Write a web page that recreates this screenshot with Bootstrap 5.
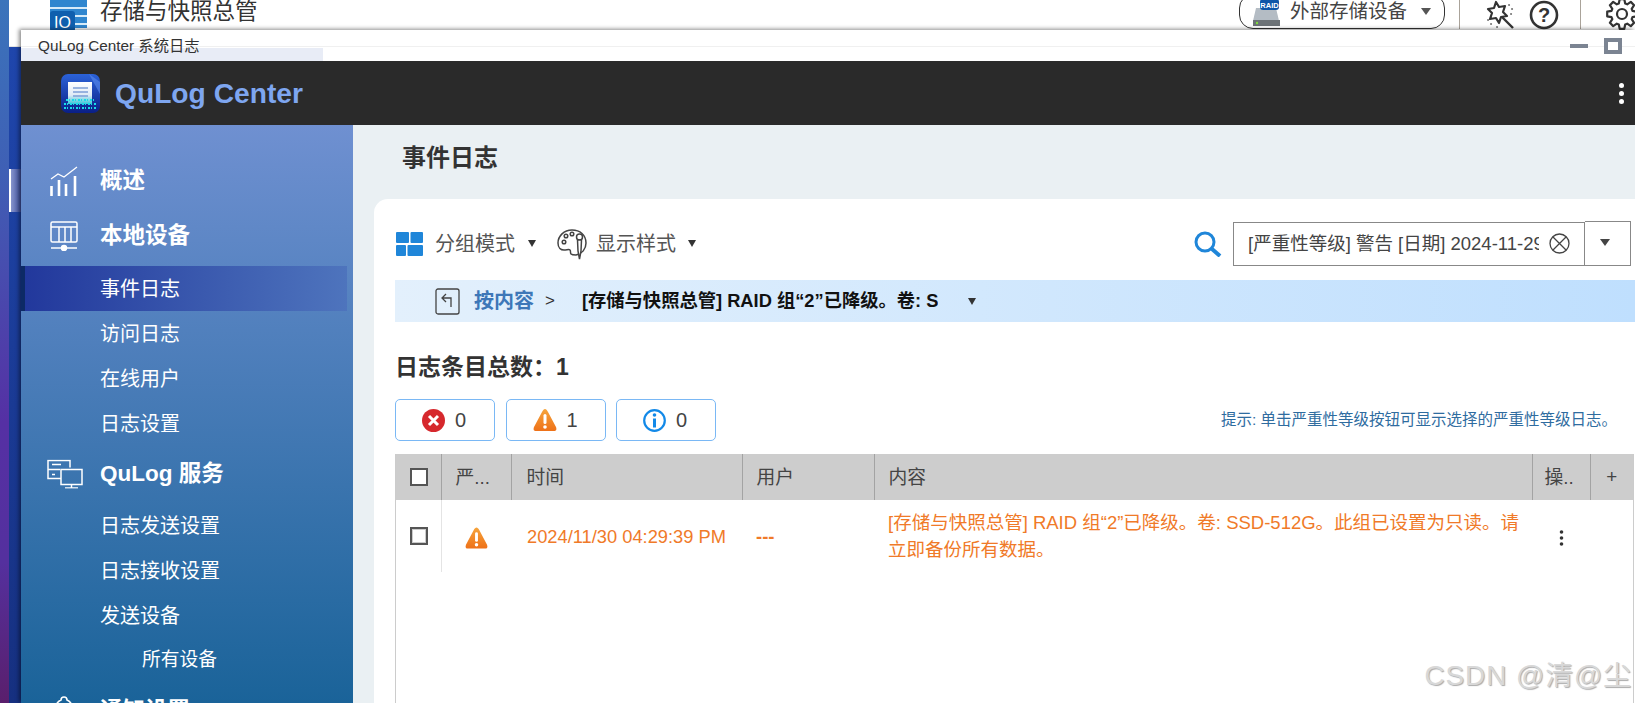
<!DOCTYPE html>
<html lang="zh-CN">
<head>
<meta charset="utf-8">
<title>QuLog Center 系统日志</title>
<link href="https://cdn.jsdelivr.net/npm/bootstrap@5.3.0/dist/css/bootstrap.min.css" rel="stylesheet">
<style>
html,body{height:703px;overflow:hidden}
body{font-family:"Liberation Sans","Noto Sans CJK SC",sans-serif;background:#fff;color:#333;width:1635px;position:relative}
.wall{width:9px;height:703px;flex:none;background:linear-gradient(#3b74bb 0,#3f5fb5 25%,#5530a4 60%,#54309e 80%,#5a1f6c 100%)}
.desk{flex:1;min-width:0}
.appbar{height:47px;background:#fff;border-bottom:1px solid #e4e4e4;overflow:hidden;padding-left:41px}
.appbar-title{font-size:22.5px;color:#333;line-height:24px;margin-left:13px}
.app-ico{margin-top:-8px;display:block;flex:none}
.pill{width:206px;height:35px;margin-top:-6px;border:1.5px solid #333;border-radius:14px;font-size:19.5px;color:#444;padding:0 13px 0 12px;line-height:1}
.pill-arrow{width:0;height:0;border:5.5px solid transparent;border-top:7px solid #555;border-bottom:0}
.vsep{width:1px;height:29px;background:#aaa39a}
.right-tools{margin-right:-3px}
.rail{height:656px;background:linear-gradient(#1f46ac,#163080)}
.rail-mark{width:2px;height:43px;background:#fff;margin-top:122px}
.rail-tint{width:10px;height:43px;margin-top:122px;background:linear-gradient(90deg,#8794cc,#3e4f9e)}
.win{position:absolute;left:21px;top:30px;right:0;bottom:0;background:#fff;box-shadow:-2px -1px 4px rgba(0,0,0,.45);display:flex;flex-direction:column}
.win-title{height:31px;flex:none;font-size:15.3px;color:#333;padding-left:17px;padding-right:13px;background:linear-gradient(#e8ecf6,#e8ecf6) left bottom/302px 13px no-repeat,linear-gradient(#f0f0f0,#f0f0f0) left 16px/100% 1px no-repeat,#fff;line-height:30px}
.win-min{width:18px;height:4px;background:#7b8492;margin-right:16px}
.win-max{width:18px;height:16px;border:4px solid #7b8492;background:#fff}
.win-head{height:64px;flex:none;background:#2a2a2a;padding-left:40px;padding-right:11px}
.brand{font-size:28.2px;font-weight:700;color:#7ea6f0;margin-left:15px;line-height:1}
.kebab i{display:block;width:5px;height:5px;border-radius:50%;background:#fff;margin:3px 0}
.win-body{flex:1;min-height:0}
.side{width:332px;flex:none;background:linear-gradient(#6f90d1,#1a6399);overflow:hidden;padding-top:28px;color:#fff}
.side-head{height:55px;flex:none;font-size:22.5px;font-weight:700;padding-left:79px;position:relative}
.side-head svg{position:absolute;left:29px;top:50%;transform:translateY(-50%)}
.side-head svg.ico-wide{left:26px}
.side-sub{height:45px;flex:none;font-size:20px;padding-left:75px;margin-right:6px;border-left:4px solid transparent}
.side-sub.is-on{background:linear-gradient(90deg,#22389c,#4e74bd);border-left-color:#0d2a66}
.side-deep{font-size:18.75px;padding-left:117px}
.gap-top3{margin-top:3px}.gap-top2{margin-top:2px}
.main-area{flex:1;min-width:0;background:#eaf0f3;display:flex;flex-direction:column}
.main-title{height:74px;flex:none;font-size:24px;font-weight:700;color:#333;padding-left:49px;line-height:66px}
.panel{flex:1;background:#fff;border-top-left-radius:14px;margin-left:21px;padding-left:21px;display:flex;flex-direction:column;min-height:0}
.tools{height:45px;margin-top:22px;flex:none;padding-right:4px;padding-left:1px}
.tool-txt{font-size:20px;color:#555;line-height:1}
.tri{width:0;height:0;border:4.5px solid transparent;border-top:7px solid #333;border-bottom:0}
.search-box{width:352px;height:44px;border:1px solid #888;font-size:18.5px;color:#444;padding-left:14px;padding-right:14px}
.search-txt{width:291px;overflow:hidden;white-space:nowrap;flex:none}
.search-drop{width:46px;height:45px;border:1px solid #888;border-left:0;padding:0 5px 2px 0}
.tri-drop{border-width:7px 5.5px 0;border-top-color:#444}
.crumb{height:42px;margin-top:14px;flex:none;background:linear-gradient(90deg,#e3f0fc,#bfdffe);padding-left:40px}
.crumb-a{font-size:20px;font-weight:700;color:#3d77b8;margin-left:14px}
.crumb-gt{font-size:17px;color:#333;margin-left:11px}
.crumb-b{font-size:18.3px;font-weight:700;color:#111;margin-left:27px;width:356px;overflow:hidden;white-space:nowrap}
.crumb-tri{margin-left:30px;border-top-color:#333}
.total{font-size:23px;font-weight:700;color:#333;height:44px;margin-top:23px;flex:none;line-height:44px}
.sev-row{margin-top:10px;height:42px;flex:none;padding-right:18px;gap:10.5px}
.sev{width:100px;height:42px;border:1px solid #7ab8f5;border-radius:5px;background:#fff;font-size:20px;color:#444;padding:0 0 0 26px;gap:10px}
.hint{font-size:15.5px;color:#2f6c9f;line-height:1}
.tbl-wrap{flex:1;margin-top:13px;border-left:1px solid #ccc;border-right:1px solid #ccc;min-height:0;margin-right:1px}
.log-tbl{table-layout:fixed;width:100%;margin:0;--bs-table-bg:transparent}
.log-tbl>thead>tr>th{height:46px;background:#cdcdcd;font-weight:400;font-size:18.75px;color:#444;padding:2px 4px 0 14px;border:0;border-left:1px solid #a3a3a3;white-space:nowrap;overflow:hidden;vertical-align:middle}
.log-tbl>thead>tr>th:first-child{border-left:0}
.log-tbl>thead>tr>th.head-time{padding-left:15px}
.log-tbl>thead>tr>th.head-op{padding-left:12px}
.log-tbl>tbody>tr>td{height:72px;border:0;padding:0 14px;font-size:18.5px;color:#f07a28;vertical-align:middle;line-height:27px}
.log-tbl>tbody>tr>td:first-child{border-right:1px solid #e4e4e4}
.log-tbl>thead>tr>th.cell-c,.log-tbl>tbody>tr>td.cell-c{padding:0;text-align:center}
.chk{display:block;width:18px;height:18px;border:2px solid #555;background:#fff;margin-left:14px}
.chk-row{box-shadow:inset 0 0 0 1px #ccc}
.log-tbl>tbody>tr>td.time-cell{font-size:18.3px;white-space:nowrap;padding-left:16px;padding-right:0}
.log-tbl>tbody>tr>td.msg-cell{padding-right:10px}
.dash-cell{font-weight:700}
.mark-wm{position:absolute;right:3px;bottom:13px;font-size:27.8px;color:#d8d8d8;text-shadow:1px 1px 1px #aaa;line-height:1;letter-spacing:1px}
</style>
</head>
<body class="d-flex">
<div class="wall"></div>
<div class="desk">
  <div class="appbar d-flex align-items-start">
    <svg class="app-ico" width="37" height="40" viewBox="0 0 37 40"><ellipse cx="18" cy="6" rx="18" ry="6" fill="#3f93d6"/><rect y="6" width="37" height="30" fill="#2f86cf"/><path d="M0 16h37M0 24h37M0 32h37" stroke="#d6ebf9" stroke-width="2"/><rect y="19" width="25" height="21" rx="3" fill="#0f5fae"/><text x="12.5" y="35.500" font-size="16" fill="#fff" text-anchor="middle" font-family="Liberation Sans">IO</text></svg>
    <div class="appbar-title">存储与快照总管</div>
    <div class="right-tools ms-auto d-flex align-items-start">
      <div class="pill d-flex align-items-center">
        <svg width="28" height="28" viewBox="0 0 28 28" class="me-2"><path d="M4 10h20l3 13H1z" fill="#b4bcc4"/><rect x="1" y="22" width="27" height="6" fill="#6d7377"/><circle cx="5" cy="25" r="1.2" fill="#7fdc3c"/><rect x="8" y="1" width="19" height="11" rx="3" fill="#0f55a8"/><text x="17.5" y="9.5" font-size="7.5" font-weight="700" fill="#fff" text-anchor="middle" font-family="Liberation Sans">RAID</text></svg>
        <span style="margin-left:2px">外部存储设备</span>
        <span class="pill-arrow ms-auto"></span>
      </div>
      <div class="vsep" style="margin-left:14px"></div>
      <svg width="30" height="30" viewBox="0 0 30 30" style="margin-left:25px"><path d="M11 2l3 5 6-1-2 6 4 4-6 1-2 6-3-5-6 1 2-6-4-4 6-1z" fill="none" stroke="#333" stroke-width="2.2" stroke-linejoin="round"/><path d="M17 17l11 11" stroke="#333" stroke-width="2.4"/><path d="M24 5h.1M27 9h.1M26 14h.1M6 24h.1M12 27h.1M3 20h.1" stroke="#777" stroke-width="2" stroke-linecap="round"/></svg>
      <svg width="30" height="30" viewBox="0 0 30 30" style="margin-left:14px"><circle cx="15" cy="15" r="13" fill="none" stroke="#333" stroke-width="2.6"/><text x="15" y="22" font-size="20" font-weight="700" fill="#333" text-anchor="middle" font-family="Liberation Sans">?</text></svg>
      <div class="vsep" style="margin-left:21px"></div>
      <svg width="32" height="32" viewBox="0 0 32 32" style="margin-left:25px;margin-top:-2px;overflow:visible"><g transform="translate(16,16)"><polygon fill="none" stroke="#333" stroke-width="2.2" stroke-linejoin="round" points="10.5,-3.2 14.8,-2.3 14.8,2.3 10.5,3.2 9.7,5.2 12.1,8.8 8.8,12.1 5.2,9.7 3.2,10.5 2.3,14.8 -2.3,14.8 -3.2,10.5 -5.2,9.7 -8.8,12.1 -12.1,8.8 -9.7,5.2 -10.5,3.2 -14.8,2.3 -14.8,-2.3 -10.5,-3.2 -9.7,-5.2 -12.1,-8.8 -8.8,-12.1 -5.2,-9.7 -3.2,-10.5 -2.3,-14.8 2.3,-14.8 3.2,-10.5 5.2,-9.7 8.8,-12.1 12.1,-8.8 9.7,-5.2"/><circle r="5" fill="none" stroke="#333" stroke-width="2.2"/></g></svg>
    </div>
  </div>
  <div class="rail d-flex align-items-start"><div class="rail-mark"></div><div class="rail-tint"></div></div>
</div>

<div class="win">
  <div class="win-title d-flex align-items-center">
    <span>QuLog Center 系统日志</span>
    <span class="win-min ms-auto"></span>
    <span class="win-max"></span>
  </div>
  <div class="win-head d-flex align-items-center">
    <svg width="39" height="39" viewBox="0 0 39 39"><defs><linearGradient id="lg1" x1="0" y1="0" x2="0" y2="1"><stop offset="0" stop-color="#2b62d8"/><stop offset="1" stop-color="#0a1f86"/></linearGradient><linearGradient id="lg2" x1="0" y1="0" x2="0" y2="1"><stop offset="0" stop-color="#fff"/><stop offset=".6" stop-color="#dfeaf6"/><stop offset="1" stop-color="#39c6d8"/></linearGradient></defs><rect width="39" height="39" rx="7" fill="url(#lg1)"/><path d="M28 0l11 8v12z" fill="#5b8cec" opacity=".6"/><rect x="7" y="8" width="24" height="22" fill="url(#lg2)"/><path d="M12 14h15M12 18h15M12 22h15" stroke="#7d9fd6" stroke-width="1.5"/><path d="M5 26h29M3 30h33M3 34h33" stroke="#19dbe8" stroke-width="2" stroke-dasharray="2 1 1 2"/></svg>
    <span class="brand">QuLog Center</span>
    <span class="kebab ms-auto"><i></i><i></i><i></i></span>
  </div>
  <div class="win-body d-flex">
    <nav class="side d-flex flex-column flex-shrink-0">
      <div class="side-head d-flex align-items-center"><svg width="29" height="30" viewBox="0 0 29 30" fill="none" stroke="#fff"><path d="M1 13l7-5 6 3 13-10" stroke-width="1.3"/><path d="M1.5 20v10M9 14v16M16 18v12M25 10v20" stroke-width="2.6"/></svg>概述</div>
      <div class="side-head d-flex align-items-center"><svg width="28" height="30" viewBox="0 0 28 30" fill="none" stroke="#fff" stroke-width="1.5"><rect x="1" y="1" width="26" height="20" rx="1.5"/><path d="M1 6h26M9 6v15M15 6v15M21 6v15"/><path d="M1 27h26"/><circle cx="14" cy="27" r="2.5" fill="#fff"/></svg>本地设备</div>
      <div class="side-sub is-on gap-top3 d-flex align-items-center">事件日志</div>
      <div class="side-sub d-flex align-items-center">访问日志</div>
      <div class="side-sub d-flex align-items-center">在线用户</div>
      <div class="side-sub d-flex align-items-center">日志设置</div>
      <div class="side-head d-flex align-items-center"><svg class="ico-wide" width="36" height="29" viewBox="0 0 36 29" fill="none" stroke="#fff" stroke-width="1.5"><path d="M14 19H1V1h22v7"/><path d="M1 10h12M5 5h9M5 15h3"/><rect x="14" y="10" width="21" height="15"/><path d="M24.500 25v3M18 28.500h13"/></svg>QuLog 服务</div>
      <div class="side-sub gap-top2 d-flex align-items-center">日志发送设置</div>
      <div class="side-sub d-flex align-items-center">日志接收设置</div>
      <div class="side-sub d-flex align-items-center">发送设备</div>
      <div class="side-sub side-deep d-flex align-items-center">所有设备</div>
      <div class="side-head d-flex align-items-center"><svg width="28" height="30" viewBox="0 0 28 30" fill="none" stroke="#fff" stroke-width="1.6"><path d="M14 1a3 3 0 0 1 3 3c5 2 6 6 6 12l3 6H2l3-6c0-6 1-10 6-12a3 3 0 0 1 3-3z"/></svg>通知设置</div>
    </nav>
    <main class="main-area">
      <div class="main-title">事件日志</div>
      <div class="panel">
        <div class="tools d-flex align-items-center">
          <svg width="27" height="24" viewBox="0 0 27 24" fill="#1f86d9"><rect width="13" height="11" rx="1"/><rect x="14.500" width="12.500" height="11" rx="1"/><rect y="13" width="10" height="11" rx="1"/><rect x="11.500" y="13" width="15.500" height="11" rx="1"/></svg>
          <span class="tool-txt" style="margin-left:12px">分组模式</span>
          <span class="tri" style="margin-left:13px"></span>
          <svg width="30" height="32" viewBox="0 0 30 32" fill="none" stroke="#444" stroke-width="1.5" style="margin-left:21px"><path d="M15 2C7 2 1 8 1 15c0 5 3 7 6 7 3 0 5-1 6 0s0 3 1 4 3 1 5 1c6-1 10-6 10-12C29 7 23 2 15 2z" fill="#fff"/><circle cx="7" cy="14" r="1.800"/><circle cx="9" cy="8" r="1.800"/><circle cx="15" cy="6" r="1.800"/><circle cx="22.500" cy="9" r="3"/><path d="M20.500 12l.5 11 1.500 8 1.500-8 .5-11z" fill="#fff"/></svg>
          <span class="tool-txt" style="margin-left:9px">显示样式</span>
          <span class="tri" style="margin-left:12px"></span>
          <svg class="ms-auto" width="28" height="26" viewBox="0 0 28 26" fill="none" stroke="#1f86d9"><circle cx="11" cy="11" r="9" stroke-width="3"/><path d="M18 18l8 7" stroke-width="4"/></svg>
          <div class="search-box d-flex align-items-center" style="margin-left:11px">
            <span class="search-txt">[严重性等级] 警告 [日期] 2024-11-29 ~ 2024-11-30</span>
            <svg class="ms-auto" width="21" height="21" viewBox="0 0 21 21" fill="none" stroke="#444" stroke-width="1.300"><circle cx="10.500" cy="10.500" r="9.500"/><path d="M4 4l13 13M17 4L4 17"/></svg>
          </div>
          <div class="search-drop d-flex align-items-center justify-content-center"><span class="tri tri-drop"></span></div>
        </div>
        <div class="crumb d-flex align-items-center">
          <svg width="25" height="27" viewBox="0 0 25 27" fill="none" stroke="#444" stroke-width="1.300"><rect x="1" y="1" width="23" height="25" rx="2"/><path d="M16 19v-9H7M11 6l-4 4 4 4"/></svg>
          <span class="crumb-a">按内容</span>
          <span class="crumb-gt">&gt;</span>
          <span class="crumb-b">[存储与快照总管] RAID 组“2”已降级。卷: S</span>
          <span class="tri crumb-tri"></span>
        </div>
        <div class="total">日志条目总数：1</div>
        <div class="sev-row d-flex align-items-center">
          <button type="button" class="btn sev d-flex align-items-center"><svg width="23" height="23" viewBox="0 0 23 23"><circle cx="11.500" cy="11.500" r="11.500" fill="#d6282d"/><path d="M7 7l9 9M16 7l-9 9" stroke="#fff" stroke-width="3"/></svg>0</button>
          <button type="button" class="btn sev d-flex align-items-center"><svg width="24" height="22" viewBox="0 0 24 22"><defs><linearGradient id="wa" x1="0" y1="0" x2="0" y2="1"><stop offset="0" stop-color="#f6a43b"/><stop offset="1" stop-color="#ee7118"/></linearGradient></defs><path d="M12 0c1 0 2 1 3 3l8 15c1 3 0 4-2 4H3c-2 0-3-1-2-4L9 3c1-2 2-3 3-3z" fill="url(#wa)"/><rect x="10.500" y="5" width="3" height="10" rx="1.500" fill="#fff"/><circle cx="12" cy="18" r="1.800" fill="#fff"/></svg>1</button>
          <button type="button" class="btn sev d-flex align-items-center"><svg width="23" height="23" viewBox="0 0 23 23" fill="none"><circle cx="11.500" cy="11.500" r="10.300" stroke="#1289e8" stroke-width="2.200"/><rect x="10" y="9.500" width="3" height="9" fill="#1289e8"/><circle cx="11.500" cy="6" r="1.800" fill="#1289e8"/></svg>0</button>
          <span class="hint ms-auto">提示: 单击严重性等级按钮可显示选择的严重性等级日志。</span>
        </div>
        <div class="tbl-wrap">
          <table class="table log-tbl">
            <colgroup><col style="width:45px"><col style="width:70px"><col style="width:231px"><col style="width:132px"><col style="width:658px"><col style="width:58px"><col></colgroup>
            <thead><tr>
              <th class="cell-c"><span class="chk"></span></th><th>严...</th><th class="head-time">时间</th><th>用户</th><th>内容</th><th class="head-op">操..</th><th class="cell-c">+</th>
            </tr></thead>
            <tbody><tr>
              <td class="cell-c"><span class="chk chk-row"></span></td>
              <td class="cell-c"><svg width="23" height="22" viewBox="0 0 24 22"><path d="M12 0c1 0 2 1 3 3l8 15c1 3 0 4-2 4H3c-2 0-3-1-2-4L9 3c1-2 2-3 3-3z" fill="url(#wa)"/><rect x="10.500" y="5" width="3" height="10" rx="1.500" fill="#fff"/><circle cx="12" cy="18" r="1.800" fill="#fff"/></svg></td>
              <td class="time-cell">2024/11/30 04:29:39 PM</td>
              <td class="dash-cell">---</td>
              <td class="msg-cell">[存储与快照总管] RAID 组“2”已降级。卷: SSD-512G。此组已设置为只读。请立即备份所有数据。</td>
              <td class="cell-c"><svg width="5" height="16" viewBox="0 0 5 16" fill="#333"><circle cx="2.500" cy="2" r="1.800"/><circle cx="2.500" cy="8" r="1.800"/><circle cx="2.500" cy="14" r="1.800"/></svg></td>
              <td></td>
            </tr></tbody>
          </table>
        </div>
      </div>
    </main>
  </div>
</div>
<div class="mark-wm">CSDN @清@尘</div>
<script src="https://cdn.jsdelivr.net/npm/bootstrap@5.3.0/dist/js/bootstrap.bundle.min.js"></script>
</body>
</html>
